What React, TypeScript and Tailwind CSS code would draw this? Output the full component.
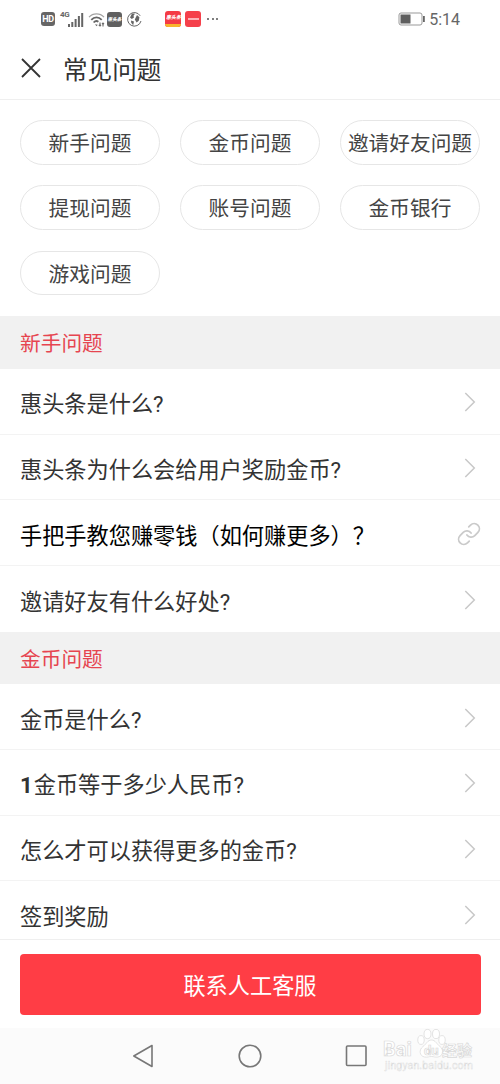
import React from 'react';
import clsx from 'clsx';

type Question = {
  title: string;
  prefix?: string;
  external?: boolean;
};

type Section = {
  name: string;
  questions: Question[];
};

const categories = [
  '新手问题',
  '金币问题',
  '邀请好友问题',
  '提现问题',
  '账号问题',
  '金币银行',
  '游戏问题',
];

const sections: Section[] = [
  {
    name: '新手问题',
    questions: [
      { title: '惠头条是什么?' },
      { title: '惠头条为什么会给用户奖励金币?' },
      { title: '手把手教您赚零钱（如何赚更多）？', external: true },
      { title: '邀请好友有什么好处?' },
    ],
  },
  {
    name: '金币问题',
    questions: [
      { title: '金币是什么?' },
      { prefix: '1', title: '金币等于多少人民币?' },
      { title: '怎么才可以获得更多的金币?' },
      { title: '签到奖励' },
    ],
  },
];

const StatusBar: React.FC = () => (
  <div className="flex h-[38px] shrink-0 items-center justify-between pl-[41px] pr-10 text-[#666]">
    <div className="flex items-center">
      <span className="flex h-[14px] w-[14px] items-center justify-center rounded-[3px] bg-[#666] text-[9px] font-bold leading-none tracking-tighter text-white">
        HD
      </span>
      <span className="ml-[5px] -mt-[8px] w-[9px] text-[8px] font-bold leading-none tracking-tighter">4G</span>
      <svg className="-ml-[1px] h-[15px] w-[16px]" viewBox="0 0 16 15" fill="currentColor">
        <rect x="0" y="12" width="2" height="3" />
        <rect x="3.3" y="10" width="2" height="5" />
        <rect x="6.6" y="7" width="2" height="8" />
        <rect x="9.9" y="4" width="2" height="11" />
        <rect x="13.2" y="1" width="2" height="14" />
      </svg>
      <svg className="ml-[4px] h-[15px] w-[17px]" viewBox="0 0 17 15" fill="none" stroke="currentColor">
        <path d="M1 5.2C5 .8 12 .8 16 5.2" strokeWidth="1.2" opacity=".6" />
        <path d="M3.3 7.8c3-3.3 7.4-3.3 10.4 0" strokeWidth="1.8" />
        <path d="M5.6 10.5c1.6-1.700 3.400-1.800 4.800-.8" strokeWidth="1.8" />
        <path d="M7 12.300l1.500 2 1.300-1.500z" fill="currentColor" stroke="none" />
        <path d="M12 10.500v3.500M10.800 12.800L12 14l1-1.200M15 14.500V11M14 12.200l1-1.200 1 1.200" strokeWidth="1.1" />
      </svg>
      <span className="ml-[2px] flex h-[15px] w-[15px] items-center justify-center overflow-hidden rounded-[3px] bg-[#606060]">
        <span className="scale-[.42] whitespace-nowrap text-[11px] font-black italic leading-none text-white">惠头条</span>
      </span>
      <svg className="ml-[5px] h-[15px] w-[15px]" viewBox="0 0 15 15" fill="none" stroke="currentColor">
        <path d="M13.2 3.8A6.8 6.8 0 1 0 14 9" strokeWidth="1" />
        <path d="M5 1.5l3 .2-1.5 2.1L7 5.5 4.800 7 3 5.600zM4 8.500l3 1-.8 3.800-2-2.500zM10 3l2.400 2.200-.6 3.600-2.200 1.800-1.800-3z" fill="currentColor" stroke="none" />
      </svg>
      <span className="ml-[23px] flex h-[16px] w-[16px] flex-col items-center justify-between overflow-hidden rounded-[3px] bg-[#f43b45]">
        <span className="mt-[1px] scale-[.45] whitespace-nowrap text-[11px] font-black italic leading-none text-white">惠头条</span>
        <span className="h-[3px] w-full bg-[#f8b52c]" />
      </span>
      <span className="ml-[4px] flex h-[16px] w-[16px] items-center justify-center rounded-[3px] bg-[#f5404b]">
        <span className="h-[2px] w-[11px] bg-white/60" />
      </span>
      <span className="ml-[6px] flex gap-[2.5px]">
        <span className="h-[2px] w-[2px] rounded-full bg-[#555]" />
        <span className="h-[2px] w-[2px] rounded-full bg-[#555]" />
        <span className="h-[2px] w-[2px] rounded-full bg-[#555]" />
      </span>
    </div>
    <div className="flex items-center">
      <svg className="h-[14px] w-[28px]" viewBox="0 0 28 14">
        <rect x="1" y="1" width="23" height="12" rx="2" fill="none" stroke="#999" />
        <rect x="2.5" y="2.5" width="10" height="9" fill="#5f5f5f" />
        <rect x="25" y="4" width="1.8" height="6" fill="#666" />
      </svg>
      <span className="ml-[3px] mt-[2px] text-[16px] leading-none">5:14</span>
    </div>
  </div>
);

const QuestionRow: React.FC<{ question: Question; last: boolean }> = ({ question, last }) => (
  <li
    className={clsx(
      'flex h-[65.7px] items-center justify-between border-[#f3f3f3] pl-5',
      question.external ? 'pr-[19px] text-black' : 'pr-6 text-[#333]',
      !last && 'border-b'
    )}
  >
    <span className="mt-[6px] whitespace-nowrap text-[22.2px] leading-[32px]">
      {question.prefix && <span className="mr-[1px] font-bold">{question.prefix}</span>}
      {question.title}
    </span>
    {question.external ? (
      <svg className="mt-[2px] h-6 w-6" viewBox="0.5 0.5 23 23" fill="none" stroke="#cacaca" strokeWidth="1.7" strokeLinecap="round">
        <path d="M10 13a5 5 0 0 0 7.540.540l3-3a5 5 0 0 0-7.070-7.070l-1.720 1.710" />
        <path d="M14 11a5 5 0 0 0-7.540-.540l-3 3a5 5 0 0 0 7.070 7.070l1.710-1.710" />
      </svg>
    ) : (
      <svg className="mt-[2px] h-5 w-3" viewBox="0 0 12 20" fill="none" stroke="#c8c8c8" strokeWidth="1.5">
        <path d="M1.300 1l9 9-9 9" />
      </svg>
    )}
  </li>
);

const Watermark: React.FC = () => (
  <svg
    className="absolute left-[380px] top-0 h-[48px] w-[98px]"
    viewBox="0 0 98 48"
    fill="#fff"
    stroke="#d9d9d9"
    strokeWidth=".7"
  >
    <ellipse cx="41" cy="12" rx="3.2" ry="4.4" />
    <ellipse cx="47.5" cy="6" rx="3.5" ry="4.6" />
    <ellipse cx="56" cy="6" rx="3.5" ry="4.6" />
    <ellipse cx="62" cy="12" rx="3.2" ry="4.4" />
    <path d="M51.5 12c4 0 5 4 8.5 6.5 4 3 3.5 9.500-2 10.500-3 .5-4-.5-6.500-.5s-4 1-7 .5c-5-1-6-7-1.500-10.500 3.500-2.500 4.500-6.500 8.500-6.500z" />
    <text x="3" y="28" fontSize="20" fontWeight="bold">Bai</text>
    <text x="44" y="26.5" fontSize="13" fontWeight="bold">du</text>
    <text x="62" y="28" fontSize="15" fontWeight="bold">经验</text>
    <text x="5" y="41" fontSize="10.5" strokeWidth=".4" textLength="88">jingyan.baidu.com</text>
  </svg>
);

const App: React.FC = () => {
  return (
    <div className="flex h-[1084px] w-[500px] flex-col overflow-hidden bg-white font-[Roboto,'Noto_Sans_CJK_SC',sans-serif]">
      <StatusBar />

      <header className="flex h-[61.5px] shrink-0 items-center border-b border-[#efefef] pl-[21px]">
        <svg className="h-5 w-5" viewBox="0 0 20 20" fill="none" stroke="#333" strokeWidth="1.8">
          <path d="M1 1l18 18M19 1L1 19" />
        </svg>
        <h1 className="ml-[22px] mt-[6px] text-[24.6px] leading-9 text-[#333]">常见问题</h1>
      </header>

      <main className="min-h-0 flex-1 overflow-hidden">
        <div className="grid grid-cols-3 gap-x-5 gap-y-[20.7px] px-5 pb-[21px] pt-[20.5px]">
          {categories.map((name) => (
            <button
              key={name}
              className="flex h-[44.6px] items-center justify-center whitespace-nowrap rounded-full border border-[#e6e6e6] pt-[4px] text-[20.7px] leading-none text-[#444]"
            >
              {name}
            </button>
          ))}
        </div>

        {sections.map((section) => (
          <section key={section.name}>
            <h2 className="flex h-[52.7px] items-center bg-[#f1f1f1] pl-5 text-[20.7px] text-[#e64550]">
              <span className="mt-[5px]">{section.name}</span>
            </h2>
            <ul>
              {section.questions.map((question, index) => (
                <QuestionRow
                  key={question.title}
                  question={question}
                  last={index === section.questions.length - 1}
                />
              ))}
            </ul>
          </section>
        ))}
      </main>

      <footer className="h-[89px] shrink-0 border-t border-[#efefef] px-[19.5px] pt-[14px]">
        <button className="h-[61px] w-full rounded-[4px] bg-[#ff3d45] pt-[4px] text-[22.2px] text-white">
          联系人工客服
        </button>
      </footer>

      {/* Android navigation keys */}
      <nav className="relative flex h-14 shrink-0 items-center bg-[#fbfbfb] pl-[132px]">
        <svg className="h-6 w-[236px]" viewBox="0 0 236 24" fill="none" stroke="#777" strokeWidth="1.6" strokeLinejoin="round">
          <path d="M1.8 12L20 1.5v21z" />
          <circle cx="118" cy="12" r="10.8" />
          <rect x="214.5" y="2" width="19.5" height="19.5" rx="1" />
        </svg>
        <Watermark />
      </nav>
    </div>
  );
};

export default App;
